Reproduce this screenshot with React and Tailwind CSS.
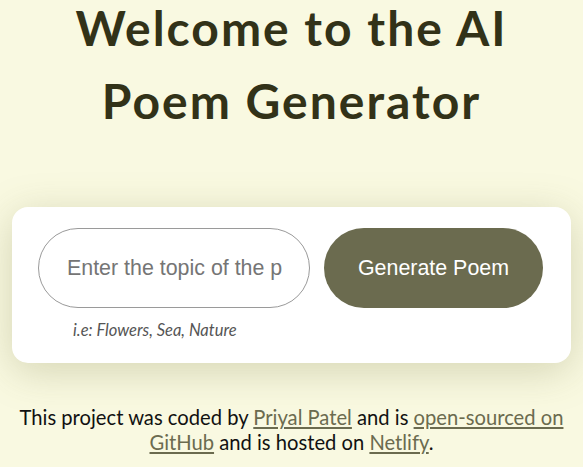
export default function App() {
  return (
    <div className="min-h-[467px] bg-[#f9f9e1] overflow-hidden" style={{ fontFamily: "Lato, 'Liberation Sans', sans-serif" }}>
      <header className="mt-[-9px] px-2 text-center">
        <h1 className="text-[48px] leading-[73px] font-bold tracking-[2px] text-[#323218]">
          Welcome to the AI
          <br />
          Poem Generator
        </h1>
      </header>

      <div className="mx-3 mt-[70px] rounded-2xl bg-white px-[26px] pt-[21px] pb-[20px] shadow-[0_8px_40px_rgba(120,120,60,0.28)]">
        <form className="flex gap-[14px]" onSubmit={ev => ev.preventDefault()}>
          <div className="w-[272px]">
            <input
              type="text"
              placeholder="Enter the topic of the poem"
              className="h-[80px] w-full rounded-full border border-[#9a9a9a] pl-[28px] pr-[27px] text-[21.4px] text-[#333] placeholder:text-[#757575] outline-none"
              style={{ fontFamily: "'Liberation Sans', Arial, sans-serif" }}
            />
            <p className="mt-[10px] pl-[35px] text-[16.5px] italic text-[#555]">i.e: Flowers, Sea, Nature</p>
          </div>
          <button
            type="submit"
            className="h-[80px] w-[219px] rounded-full bg-[#6b6b4f] text-[21.4px] text-white"
            style={{ fontFamily: "'Liberation Sans', Arial, sans-serif" }}
          >
            Generate Poem
          </button>
        </form>
      </div>

      <footer className="mt-[42px] px-4 text-center text-[20.2px] leading-[25px] text-[#111]">
        This project was coded by <a href="#" className="text-[#6b6b4f] underline">Priyal Patel</a> and is{" "}
        <a href="#" className="text-[#6b6b4f] underline">open-sourced on GitHub</a> and is hosted on{" "}
        <a href="#" className="text-[#6b6b4f] underline">Netlify</a>.
      </footer>
    </div>
  )
}
